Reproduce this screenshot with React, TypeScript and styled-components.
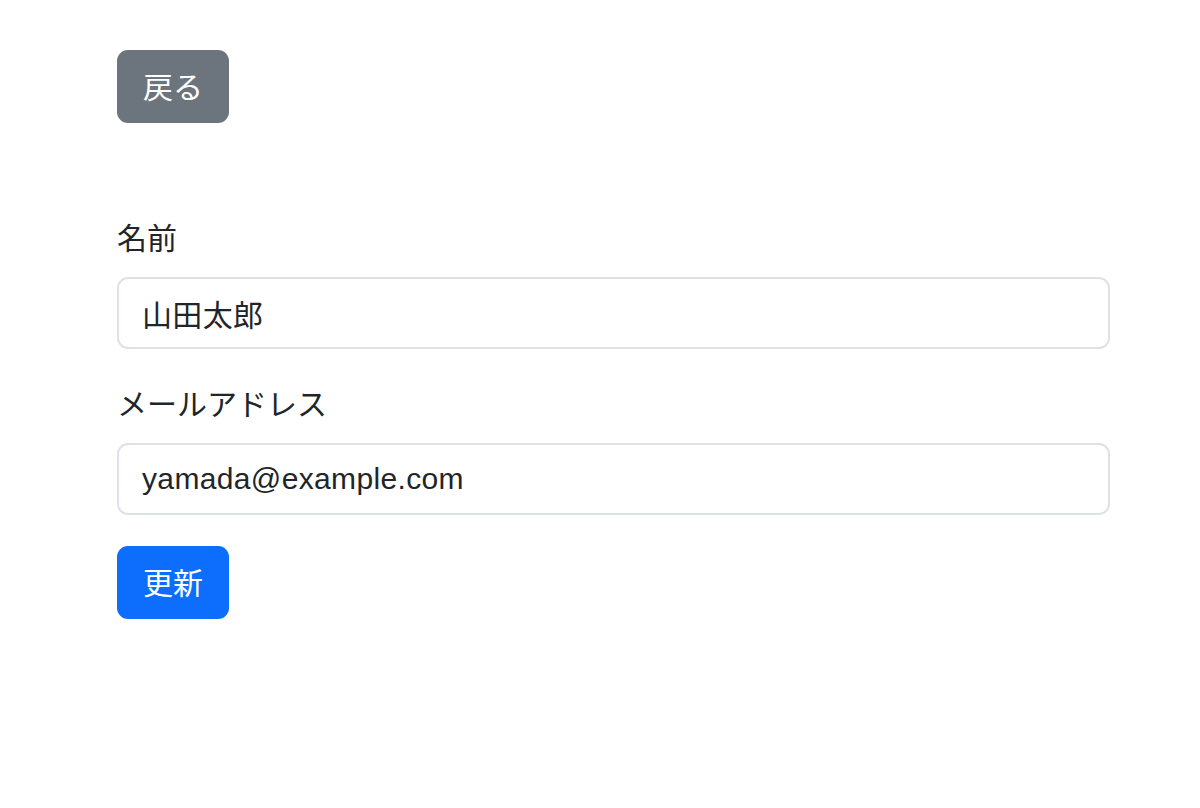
import styled, { createGlobalStyle } from "styled-components";

const GlobalStyle = createGlobalStyle`
  body {
    margin: 0;
    background: #ffffff;
    color: #212529;
    font-family: "Liberation Sans", "Noto Sans CJK JP", sans-serif;
  }
`;

const Page = styled.div`
  width: 993px;
  padding: 50px 0 0 117px;
`;

const Button = styled.button<{ $variant: "secondary" | "primary" }>`
  display: inline-flex;
  align-items: center;
  justify-content: center;
  box-sizing: border-box;
  width: 112px;
  height: 73px;
  padding: 0 24px 3px;
  border: none;
  border-radius: 11px;
  font-family: "Noto Sans CJK JP", sans-serif;
  font-size: 30px;
  color: #ffffff;
  background: ${(p) => (p.$variant === "primary" ? "#0d6efd" : "#6c757d")};
  cursor: pointer;
`;

const Form = styled.form`
  display: flex;
  flex-direction: column;
  align-items: flex-start;
  margin-top: 91px;
`;

const Field = styled.div`
  display: flex;
  flex-direction: column;
  width: 100%;
  margin-bottom: 31px;
`;

const Label = styled.label`
  font-family: "Noto Sans CJK JP", sans-serif;
  font-size: 30px;
  line-height: 45px;
  margin-bottom: 18px;
  color: #212529;
`;

const Input = styled.input`
  box-sizing: border-box;
  width: 100%;
  height: 72px;
  padding: 0 23px;
  border: 2px solid #dee2e6;
  border-radius: 11px;
  font-family: "Liberation Sans", "Noto Sans CJK JP", sans-serif;
  font-size: 30px;
  letter-spacing: 0.35px;
  color: #212529;
  background: #ffffff;
  outline: none;
`;

export default function App() {
  return (
    <>
      <GlobalStyle />
      <Page>
        <Button type="button" $variant="secondary">
          戻る
        </Button>
        <Form onSubmit={(e) => e.preventDefault()}>
          <Field>
            <Label htmlFor="name">名前</Label>
            <Input id="name" defaultValue="山田太郎" />
          </Field>
          <Field>
            <Label htmlFor="email">メールアドレス</Label>
            <Input id="email" defaultValue="yamada@example.com" />
          </Field>
          <Button type="submit" $variant="primary">
            更新
          </Button>
        </Form>
      </Page>
    </>
  );
}
